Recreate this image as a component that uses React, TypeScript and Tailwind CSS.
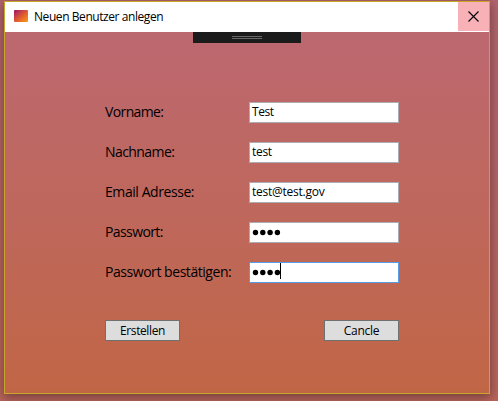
import type { ReactNode } from 'react';

function Label({ children, tracking }: { children: ReactNode; tracking: string }) {
  return <div className={`w-36 whitespace-nowrap pb-px text-[14px] leading-5 ${tracking}`}>{children}</div>;
}

function TextField({ value, tracking = '' }: { value: string; tracking?: string }) {
  return (
    <div
      className={`flex h-[21px] w-[150px] items-center border border-[#abadb3] bg-white pb-px pl-[2px] text-[12px] leading-[18px] ${tracking}`}
    >
      {value}
    </div>
  );
}

function PasswordField({ focused = false }: { focused?: boolean }) {
  return (
    <div
      className={`flex h-[21px] w-[150px] border bg-white pl-[3px] ${focused ? 'border-[#569de5]' : 'border-[#abadb3]'}`}
    >
      <svg width="27" height="19" viewBox="0 0 27 19" className="overflow-visible">
        {[2.5, 9.8, 17.1, 24.4].map((x) => (
          <circle key={x} cx={x} cy="9.5" r="2.7" />
        ))}
      </svg>
      {focused && <div className="h-4 w-px bg-black" />}
    </div>
  );
}

function Button({ children, tracking }: { children: ReactNode; tracking: string }) {
  return (
    <button
      className={`flex h-[21px] w-[75px] items-center justify-center border border-[#707070] bg-[#dddddd] pt-px text-[12px] leading-[18px] ${tracking}`}
    >
      {children}
    </button>
  );
}

export default function App() {
  return (
    <div className="h-[401px] w-[498px] overflow-hidden bg-linear-to-b from-[#b5656f] to-[#bb655b] pl-1 pt-px font-['Noto_Sans','Open_Sans',sans-serif] text-black">
      <div className="flex h-[393px] w-[486px] flex-col border border-[#c8a52c] bg-linear-to-b from-[#bc6873] to-[#c16645] shadow-[0_3px_10px_1px_rgba(50,30,30,0.5)]">
        <header className="flex h-[30px] shrink-0 bg-white pl-[9px]">
          <div className="mt-2 h-3 w-[14px] rounded-[1px] bg-linear-to-br from-[#99005f] via-[#dc5730] to-[#ff9a00]" />
          <h1 className="ml-[6px] mt-[6px] whitespace-nowrap font-['Open_Sans',sans-serif] text-[12px] leading-[18px] tracking-[-0.43px]">Neuen Benutzer anlegen</h1>
          <div className="ml-auto flex h-[29px] w-[31px] items-center justify-center bg-[#f8b1b7]">
            <svg width="11" height="11" viewBox="0 0 11 11" stroke="black" strokeWidth="1.1">
              <path d="M.5.5l10 10M10.5.5l-10 10" />
            </svg>
          </div>
        </header>
        <div className="ml-[188px] flex h-[11px] w-[108px] shrink-0 flex-col items-center gap-px bg-[#1b1b1b] pt-1">
          <div className="h-px w-[30px] bg-[#686868]" />
          <div className="h-px w-[30px] bg-[#686868]" />
        </div>
        <main className="ml-[100px] mt-[59px] w-[294px] font-['Open_Sans',sans-serif]">
          <div className="flex flex-col gap-[19px]">
            <div className="flex h-[21px] items-center"><Label tracking="tracking-[-0.62px]">Vorname:</Label><TextField value="Test" tracking="tracking-[-0.45px]" /></div>
            <div className="flex h-[21px] items-center"><Label tracking="tracking-[-0.58px]">Nachname:</Label><TextField value="test" tracking="tracking-[-0.3px]" /></div>
            <div className="flex h-[21px] items-center"><Label tracking="tracking-[-0.43px]">Email Adresse:</Label><TextField value="test@test.gov" tracking="tracking-[-0.25px]" /></div>
            <div className="flex h-[21px] items-center"><Label tracking="tracking-[-0.6px]">Passwort:</Label><PasswordField /></div>
            <div className="flex h-[21px] items-center"><Label tracking="tracking-[-0.45px]">Passwort bestätigen:</Label><PasswordField focused /></div>
          </div>
          <div className="mt-[37px] flex justify-between">
            <Button tracking="tracking-[-0.4px]">Erstellen</Button>
            <Button tracking="tracking-[-0.3px]">Cancle</Button>
          </div>
        </main>
      </div>
    </div>
  );
}
